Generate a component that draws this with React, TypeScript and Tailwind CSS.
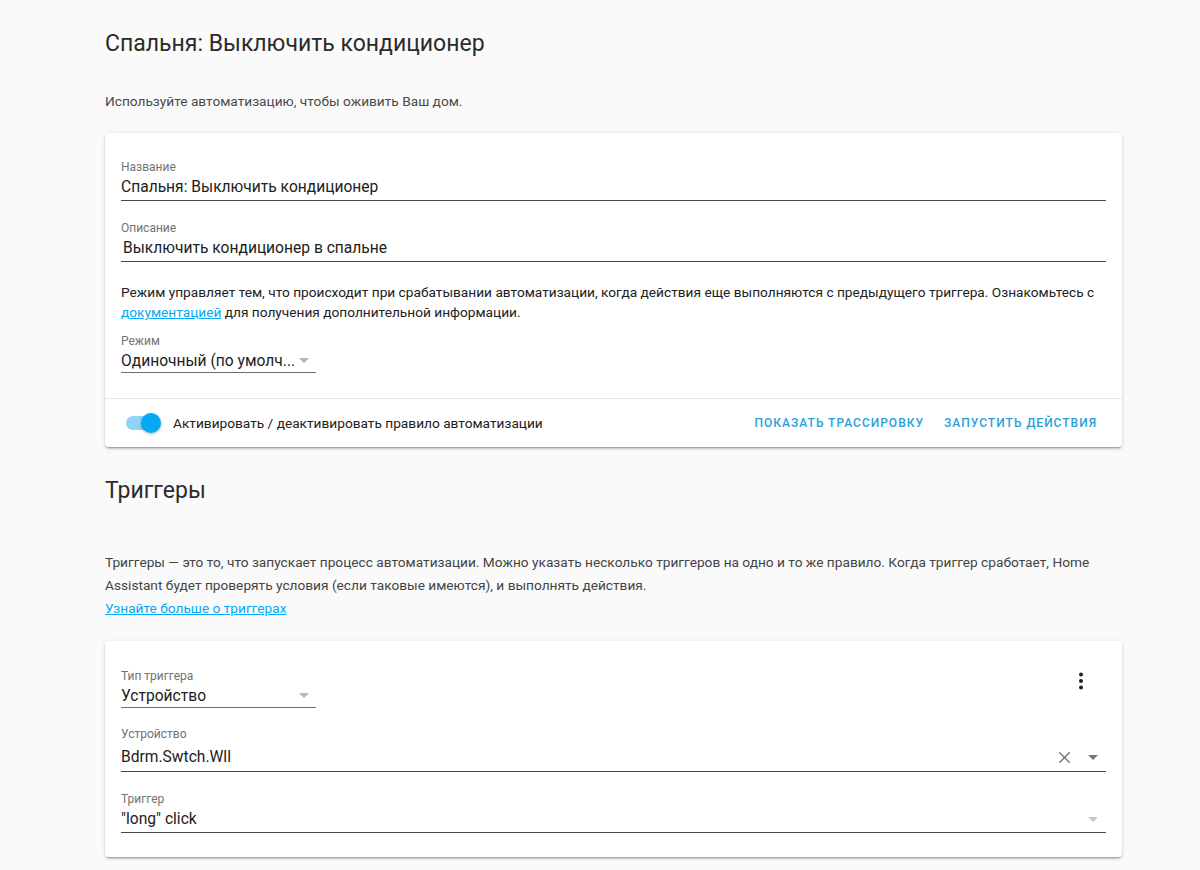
import { X } from "lucide-react";

const cardCls =
  "bg-white rounded-[4px] shadow-[0_2px_2px_0_rgba(0,0,0,0.14),0_1px_5px_0_rgba(0,0,0,0.12),0_3px_1px_-2px_rgba(0,0,0,0.2)]";

function Arrow({ color }: { color: string }) {
  return (
    <svg width="10" height="5" viewBox="0 0 10 5" className="shrink-0">
      <path d="M0 0 L10 0 L5 5 Z" fill={color} />
    </svg>
  );
}

function TextField({ label, value, indent }: { label: string; value: string; indent?: boolean }) {
  return (
    <div className="flex flex-col">
      <span className="text-[12px] leading-[16px] text-[#727272]">{label}</span>
      <div className={`mt-[2px] pb-[3px] border-b border-[#4a4a4a] text-[15.6px] leading-[20px] text-[#212121] ${indent ? "pl-[2px]" : ""}`}>
        {value}
      </div>
    </div>
  );
}

function Select({ label, value }: { label: string; value: string }) {
  return (
    <div className="flex flex-col w-[195px]">
      <span className="text-[12px] leading-[16px] text-[#727272]">{label}</span>
      <div className="mt-[2px] pb-[2px] border-b border-[#6e6e6e] flex items-center justify-between pr-[7px] h-[22px]">
        <span className="text-[15.6px] leading-[20px] text-[#212121] whitespace-nowrap">{value}</span>
        <Arrow color="#b5b5b5" />
      </div>
    </div>
  );
}

function Kebab() {
  return (
    <svg width="24" height="24" viewBox="0 0 24 24">
      <circle cx="12" cy="5.5" r="2" fill="#212121" />
      <circle cx="12" cy="12" r="2" fill="#212121" />
      <circle cx="12" cy="18.5" r="2" fill="#212121" />
    </svg>
  );
}

export default function App() {
  return (
    <div className="min-h-[870px] bg-[#fafafa] font-['Roboto',sans-serif] text-[#212121]">
      <div className="ml-[105px] w-[1017px] pt-[28px] pb-[13px]">
        <h1 className="text-[23px] leading-[32px] font-normal text-[#2b2b2b]">Спальня: Выключить кондиционер</h1>
        <p className="mt-[31px] text-[13.7px] leading-[20px] text-[#4a4a4a]">
          Используйте автоматизацию, чтобы оживить Ваш дом.
        </p>

        {/* Основная карточка */}
        <div className={`${cardCls} mt-[22px]`}>
          <div className="px-[16px] pt-[26px] pb-[25px] flex flex-col">
            <TextField label="Название" value="Спальня: Выключить кондиционер" />
            <div className="mt-[19px]">
              <TextField label="Описание" value="Выключить кондиционер в спальне" indent />
            </div>
            <p className="mt-[20px] text-[13.7px] leading-[20px] text-[#212121]">
              Режим управляет тем, что происходит при срабатывании автоматизации, когда действия еще выполняются с
              предыдущего триггера. Ознакомьтесь с
              <br />
              <a className="text-[#03a9f4] underline">документацией</a> для получения дополнительной информации.
            </p>
            <div className="mt-[11px]">
              <Select label="Режим" value="Одиночный (по умолч..." />
            </div>
          </div>
          <div className="border-t border-[#e8e8e8] h-[49px] flex items-center justify-between pl-[21px] pr-[17px]">
            <div className="flex items-center">
              <div className="relative w-[34px] h-[14px] rounded-full bg-[#8dd4f7]">
                <div className="absolute right-[-1px] top-[-3px] w-[20px] h-[20px] rounded-full bg-[#03a9f4] shadow-[0_1px_3px_rgba(0,0,0,0.3)]" />
              </div>
              <span className="ml-[13px] text-[13.7px] text-[#212121]">Активировать / деактивировать правило автоматизации</span>
            </div>
            <div className="flex items-center gap-[4px]">
              <button className="px-[8px] h-[36px] text-[12px] font-medium tracking-[1px] text-[#2a9fdb]">
                ПОКАЗАТЬ ТРАССИРОВКУ
              </button>
              <button className="px-[8px] h-[36px] text-[12px] font-medium tracking-[1px] text-[#2a9fdb]">
                ЗАПУСТИТЬ ДЕЙСТВИЯ
              </button>
            </div>
          </div>
        </div>

        <h2 className="mt-[28px] text-[23px] leading-[32px] font-normal text-[#2b2b2b]">Триггеры</h2>
        <p className="mt-[44px] text-[13.7px] leading-[23px] text-[#444]">
          Триггеры — это то, что запускает процесс автоматизации. Можно указать несколько триггеров на одно и то же
          правило. Когда триггер сработает, Home
          <br />
          Assistant будет проверять условия (если таковые имеются), и выполнять действия.
          <br />
          <a className="text-[#03a9f4] underline">Узнайте больше о триггерах</a>
        </p>

        {/* Карточка триггера */}
        <div className={`${cardCls} mt-[21px]`}>
          <div className="px-[16px] pt-[27px] pb-[24px] flex flex-col">
            <div className="flex items-start justify-between">
              <Select label="Тип триггера" value="Устройство" />
              <div className="mr-[13px] mt-[1px]">
                <Kebab />
              </div>
            </div>
            <div className="mt-[18px] flex flex-col">
              <span className="text-[12px] leading-[16px] text-[#727272]">Устройство</span>
              <div className="mt-[3px] pb-[2px] border-b border-[#4a4a4a] flex items-center h-[27px]">
                <span className="flex-1 text-[15.6px] leading-[20px] text-[#212121]">Bdrm.Swtch.Wll</span>
                <X size={19} strokeWidth={1.5} className="text-[#6b6b6b]" />
                <div className="ml-[14px] mr-[8px]">
                  <Arrow color="#757575" />
                </div>
              </div>
            </div>
            <div className="mt-[19px] flex flex-col">
              <span className="text-[12px] leading-[16px] text-[#727272]">Триггер</span>
              <div className="mt-[2px] pb-[3px] border-b border-[#4a4a4a] flex items-center">
                <span className="flex-1 text-[15.6px] leading-[20px] text-[#212121]">"long" click</span>
                <div className="mr-[8px]">
                  <Arrow color="#c8c8c8" />
                </div>
              </div>
            </div>
          </div>
        </div>
      </div>
    </div>
  );
}
